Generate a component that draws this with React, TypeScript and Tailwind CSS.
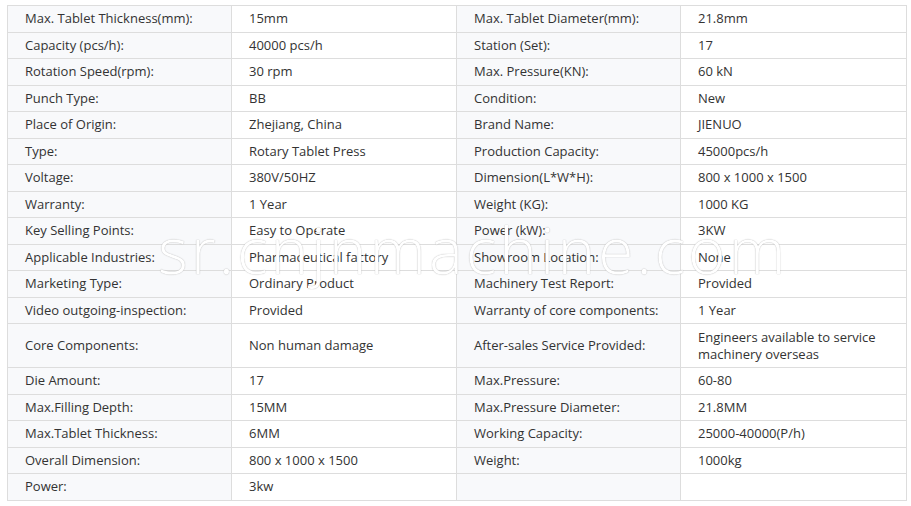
type Row = [string, string, string, string];

const rows: Row[] = [
  ['Max. Tablet Thickness(mm):', '15mm', 'Max. Tablet Diameter(mm):', '21.8mm'],
  ['Capacity (pcs/h):', '40000 pcs/h', 'Station (Set):', '17'],
  ['Rotation Speed(rpm):', '30 rpm', 'Max. Pressure(KN):', '60 kN'],
  ['Punch Type:', 'BB', 'Condition:', 'New'],
  ['Place of Origin:', 'Zhejiang, China', 'Brand Name:', 'JIENUO'],
  ['Type:', 'Rotary Tablet Press', 'Production Capacity:', '45000pcs/h'],
  ['Voltage:', '380V/50HZ', 'Dimension(L*W*H):', '800 x 1000 x 1500'],
  ['Warranty:', '1 Year', 'Weight (KG):', '1000 KG'],
  ['Key Selling Points:', 'Easy to Operate', 'Power (kW):', '3KW'],
  ['Applicable Industries:', 'Pharmaceutical factory', 'Showroom Location:', 'None'],
  ['Marketing Type:', 'Ordinary Product', 'Machinery Test Report:', 'Provided'],
  ['Video outgoing-inspection:', 'Provided', 'Warranty of core components:', '1 Year'],
  ['Core Components:', 'Non human damage', 'After-sales Service Provided:', 'Engineers available to service machinery overseas'],
  ['Die Amount:', '17', 'Max.Pressure:', '60-80'],
  ['Max.Filling Depth:', '15MM', 'Max.Pressure Diameter:', '21.8MM'],
  ['Max.Tablet Thickness:', '6MM', 'Working Capacity:', '25000-40000(P/h)'],
  ['Overall Dimension:', '800 x 1000 x 1500', 'Weight:', '1000kg'],
  ['Power:', '3kw', '', ''],
];

export default function App() {
  return (
    <div
      className="relative w-[911px] h-[506px] bg-white pt-[5px] pl-[7px] text-[13px] text-[#333333]"
      style={{ fontFamily: '"Open Sans", "Noto Sans CJK SC", sans-serif' }}
    >
      <table className="border-collapse table-fixed w-[899px] leading-[17px]">
        <colgroup>
          <col className="w-[224px]" />
          <col className="w-[225px]" />
          <col className="w-[224px]" />
          <col className="w-[226px]" />
        </colgroup>
        <tbody>
          {rows.map((r, i) => {
            const tall = r[3].length > 40;
            return (
              <tr key={i} className={tall ? 'h-[44px]' : 'h-[26.5px]'}>
                <td className="border border-[#dddddd] bg-[#f8f9fb] pl-[17px] pr-2 py-0 align-middle">{r[0]}</td>
                <td className="border border-[#dddddd] bg-white pl-[17px] pr-2 py-0 align-middle">{r[1]}</td>
                <td className="border border-[#dddddd] bg-[#f8f9fb] pl-[17px] pr-2 py-0 align-middle">{r[2]}</td>
                <td className="border border-[#dddddd] bg-white pl-[17px] pr-4 py-0 align-middle">{r[3]}</td>
              </tr>
            );
          })}
        </tbody>
      </table>

      {/* watermark */}
      <div
        className="pointer-events-none absolute left-[158px] top-[212px] text-[64px] font-light leading-[76px] tracking-[3px] text-white"
        style={{ textShadow: '0 0 1px rgba(150,150,150,0.6), 0 0 1px rgba(150,150,150,0.4)' }}
      >
        sr.cnjnmachine.com
      </div>
    </div>
  );
}
